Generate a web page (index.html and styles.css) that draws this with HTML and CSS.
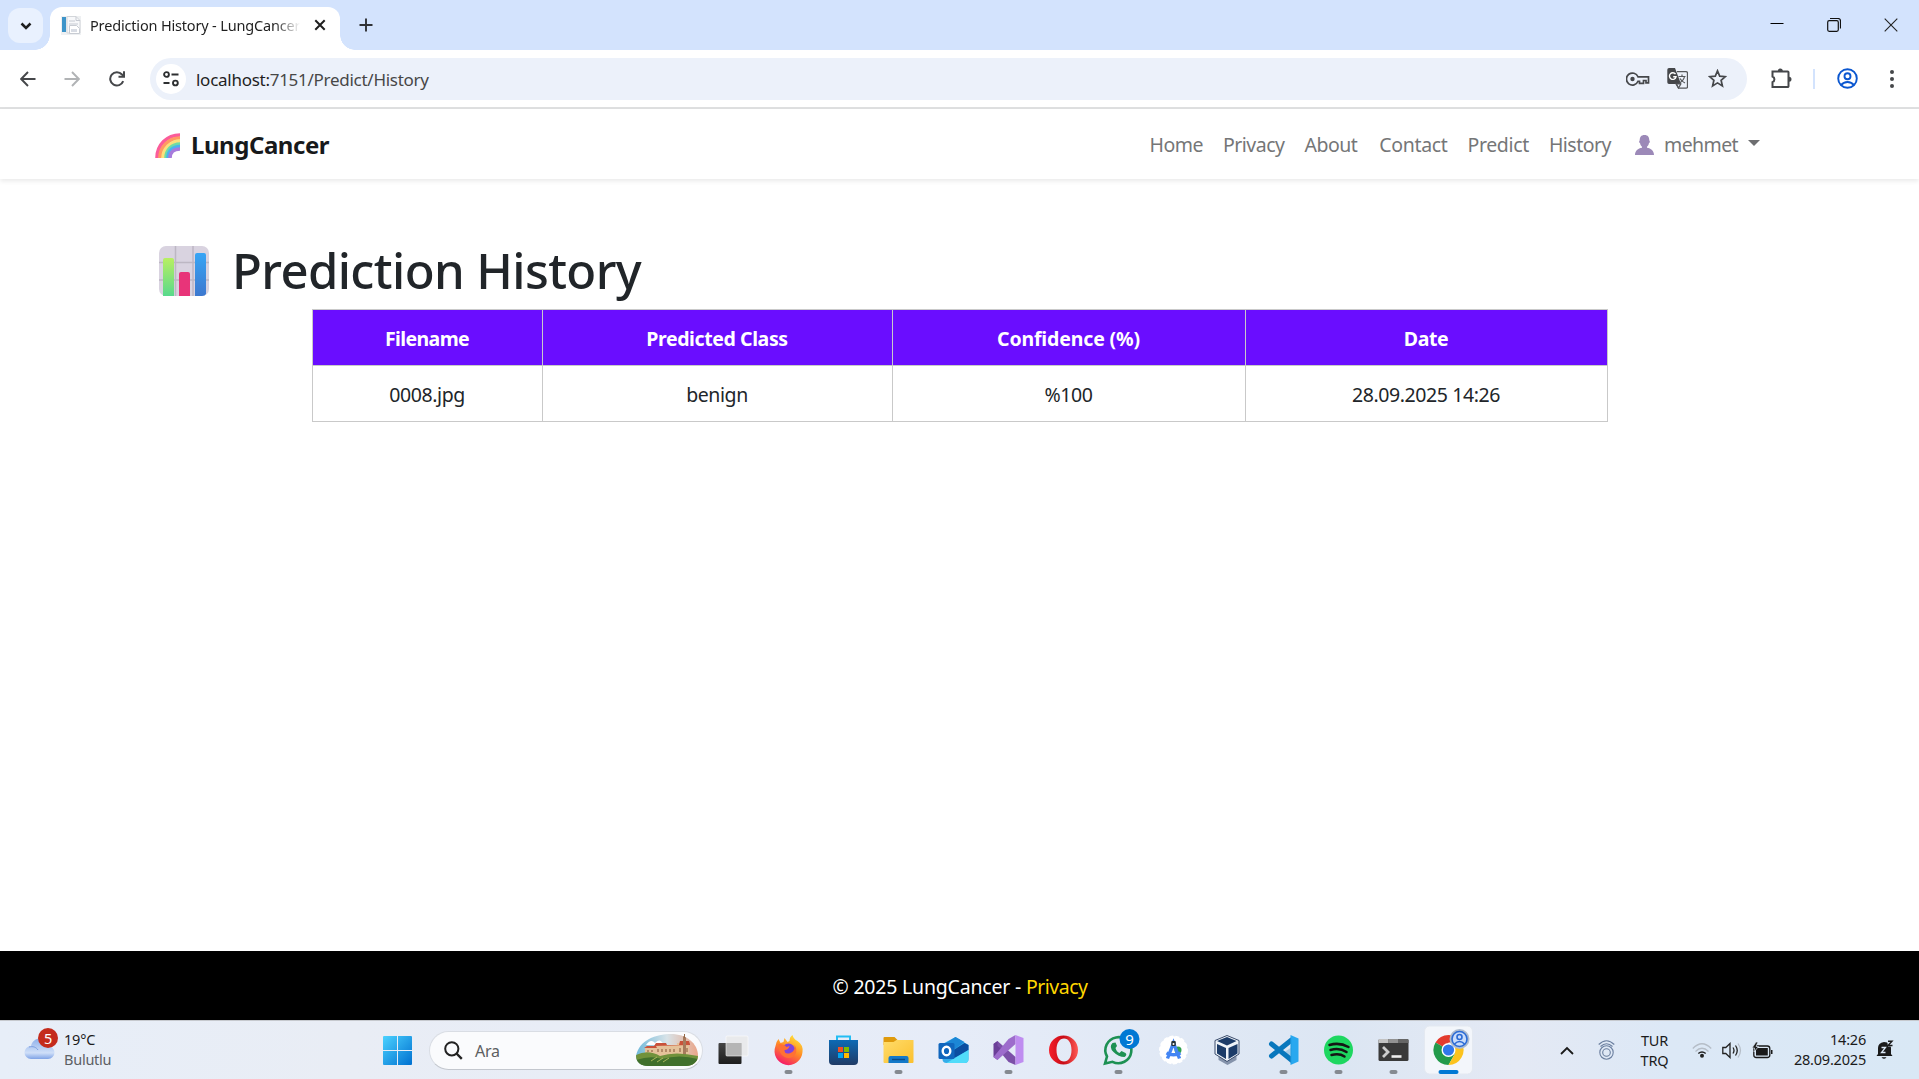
FILE: index.html
```html
<!DOCTYPE html>
<html lang="en">
<head>
<meta charset="utf-8">
<title>Prediction History - LungCancer</title>
<link rel="stylesheet" href="styles.css">
</head>
<body>
<div class="tabstrip">
  <button class="tab-search"><svg width="35" height="35" viewBox="0 0 35 35"><path d="M13.5 15.5l4.5 4.5 4.5-4.5" fill="none" stroke="#1f1f1f" stroke-width="2.5"/></svg></button>
  <div class="tab">
    <svg class="favicon" width="20" height="20" viewBox="0 0 20 20"><path d="M0 1h20v19H0z" fill="#eef0f2"/><path d="M1 2h4v15H1z" fill="#3d94c9"/><path d="M6 1.500h9l4 4V18H6z" fill="#f7f8fa" stroke="#d3d6da"/><path d="M15 1.500v4h4M8 6h6M8 9h9" fill="none" stroke="#c6cad2"/><path d="M8.500 10.500h7l3 3v5h-10z" fill="#fff" stroke="#c8ccd3"/><path d="M10 14h6v3h-6z" fill="#d8dce4"/></svg>
    <span class="tab-title">Prediction History - LungCancer</span>
    <svg class="tab-close" width="12" height="12" viewBox="0 0 12 12"><path d="M1.300 1.300l9.400 9.400M10.700 1.300l-9.400 9.400" stroke="#1f1f1f" stroke-width="2"/></svg>
  </div>
  <svg class="tab-new" width="14" height="14" viewBox="0 0 14 14"><path d="M7 .5v13M.5 7h13" stroke="#303236" stroke-width="1.900"/></svg>
  <div class="window-buttons">
    <svg width="14" height="14" viewBox="0 0 14 14"><path d="M.5 5.500h13" stroke="#000" stroke-width="1"/></svg>
    <svg width="14" height="14" viewBox="0 0 14 14"><path d="M3 .5h8a2.500 2.500 0 0 1 2.500 2.500v7.500" fill="none" stroke="#111" stroke-width="1.200"/><rect x=".7" y="2.700" width="10.600" height="10.600" rx="1.500" fill="none" stroke="#111" stroke-width="1.200"/></svg>
    <svg width="14" height="14" viewBox="0 0 14 14"><path d="M.7.700l12.600 12.600M13.300.700L.7 13.300" stroke="#222" stroke-width="1.100"/></svg>
  </div>
</div>
<div class="toolbar">
  <svg width="16" height="16" viewBox="0 0 16 16"><path d="M15.500 8H1.500M8 1L1.200 8 8 15" fill="none" stroke="#45474a" stroke-width="1.900"/></svg>
  <svg class="forward" width="16" height="16" viewBox="0 0 16 16"><path d="M.5 8h14M8 1l6.800 7L8 15" fill="none" stroke="#b1b3b5" stroke-width="1.900"/></svg>
  <svg class="reload" width="16" height="16" viewBox="0 0 16 16"><path d="M14.200 10.200A6.700 6.700 0 1 1 13 3.500l2 2" fill="none" stroke="#45474a" stroke-width="2"/><path d="M16 .3v6.500H9.500v-2H14V.3z" fill="#45474a"/></svg>
  <div class="omnibox">
    <span class="site-info"><svg width="16" height="16" viewBox="0 0 16 16"><g fill="none" stroke="#2d2f31" stroke-width="1.900"><circle cx="3.500" cy="3.500" r="2.400"/><path d="M8.500 3.500h7M.5 12h6"/><circle cx="12.400" cy="12" r="2.400"/></g></svg></span>
    <span class="url"><b>localhost:</b>7151/Predict/History</span>
    <svg class="key" width="24" height="14" viewBox="0 0 24 14"><path d="M12 4.800h10.500v6H20V8.500h-2.500v2.800h-4V9.300H12A6 6 0 1 1 12 4.800z" fill="none" stroke="#45474a" stroke-width="1.700"/><circle cx="6.500" cy="7" r="2.200" fill="#45474a"/></svg>
    <svg class="translate" width="21" height="21" viewBox="0 0 21 21"><path d="M2 0h6l6 16H2a1.700 1.700 0 0 1-1.700-1.700V1.700A1.700 1.700 0 0 1 2 0z" fill="#45474a"/><path d="M10 3.700h9a1.500 1.500 0 0 1 1.500 1.500v13.500a1.500 1.500 0 0 1-1.500 1.500h-7.500L9.500 16" fill="none" stroke="#55575a" stroke-width="1.300"/><path d="M9 16l2.500 4 2.300-4zM11.500 8.500h7M15 6.500v2M17.500 8.500c-.5 3-2.500 5-5 6.500M13 10.500c1 2 3 3.500 5 4.500" fill="none" stroke="#55575a" stroke-width="1.200"/><path d="M8.500 6.200A3.300 3.300 0 1 0 9 8.800H6.200" fill="none" stroke="#fff" stroke-width="1.400"/></svg>
    <svg class="star" width="19" height="19" viewBox="0 0 19 19"><path d="M9.500 1.800l2.200 5.300 5.700.5-4.300 3.700 1.300 5.600-4.900-3-4.900 3 1.300-5.600L1.600 7.600l5.700-.5z" fill="none" stroke="#45474a" stroke-width="1.700"/></svg>
  </div>
  <svg class="extensions" width="21" height="21" viewBox="0 0 21 21"><path d="M1.500 3.500h15.200a.8.800 0 0 1 .8.800v14a.8.800 0 0 1-.8.800H1.500v-5a3 3 0 0 0 0-5.600z" fill="none" stroke="#45474a" stroke-width="2"/><path d="M6.800 3a2.500 2.500 0 0 1 5 0zM18 8.700a2.500 2.500 0 0 1 0 5z" fill="#45474a"/></svg>
  <i class="divider"></i>
  <svg class="profile" width="21" height="21" viewBox="0 0 21 21"><g fill="none" stroke="#0b57d0" stroke-width="1.900"><circle cx="10.500" cy="10.500" r="9.300"/><circle cx="10.500" cy="8.200" r="3"/><path d="M4 17.200c3.300-4.300 9.700-4.300 13 0"/></g></svg>
  <svg class="menu" width="4" height="18" viewBox="0 0 4 18"><g fill="#45474a"><circle cx="2" cy="2" r="2"/><circle cx="2" cy="9" r="2"/><circle cx="2" cy="16" r="2"/></g></svg>
</div>

<header class="site-header">
  <a class="brand"><svg width="25" height="25" viewBox="0 0 25 25"><g fill="none" stroke-width="3.600"><path d="M2 25C2 12 12 2 25 2" stroke="#fb5c9a"/><path d="M5 25C5 14 14 5 25 5" stroke="#ff9b62"/><path d="M8 25C8 16 16 8 25 8" stroke="#fbe07d"/><path d="M11 25c0-8 6-14 14-14" stroke="#6fdca4"/><path d="M13 25c0-7 5-11.500 12-11.500" stroke="#4bb2ee"/><path d="M15 25c0-6 4-9 10-9" stroke="#a77bdc"/></g></svg><span>LungCancer</span></a>
  <nav class="site-nav">
    <a>Home</a><a>Privacy</a><a class="about">About</a><a class="contact">Contact</a><a class="predict">Predict</a><a class="history">History</a>
    <a class="user"><svg width="19" height="20" viewBox="0 0 19 20"><path d="M9.500 0C13 0 14.300 2.200 14.300 5.500c.8 0 .8 2.500-.3 2.600-.3 1.800-1 3-2 3.600v1c4 .5 7 3.300 7 7.300H0c0-4 3-6.800 7-7.300v-1c-1-.6-1.700-1.800-2-3.600-1.100-.1-1.100-2.600-.3-2.600C4.700 2.200 6 0 9.500 0z" fill="#9c89b8"/></svg><span>mehmet</span><i class="caret"></i></a>
  </nav>
</header>

<main class="page">
  <h1><svg width="50" height="50" viewBox="0 0 50 50"><defs><linearGradient id="green" x2="0" y2="1"><stop stop-color="#b9ef62"/><stop offset="1" stop-color="#58d98c"/></linearGradient><linearGradient id="blue" x2="0" y2="1"><stop stop-color="#37a5f5"/><stop offset="1" stop-color="#3d78cf"/></linearGradient></defs><rect width="50" height="50" rx="7" fill="#d9d3e0"/><path d="M16.500 0v50M34 0v50M0 16.500h50M0 34h50" stroke="#bdb7c3" stroke-width="1.500"/><path d="M4 50V14a2 2 0 0 1 2-2h7a2 2 0 0 1 2 2v36z" fill="url(#green)"/><path d="M20 50V28a2 2 0 0 1 2-2h7a2 2 0 0 1 2 2v22z" fill="#e83479"/><path d="M36 50V9a2 2 0 0 1 2-2h7a2 2 0 0 1 2 2v39q-1 2-4 2z" fill="url(#blue)"/></svg><span>Prediction History</span></h1>
  <table class="results">
    <thead><tr><th class="c1">Filename</th><th class="c2">Predicted Class</th><th class="c3">Confidence (%)</th><th class="c4">Date</th></tr></thead>
    <tbody><tr><td>0008.jpg</td><td>benign</td><td>%100</td><td>28.09.2025 14:26</td></tr></tbody>
  </table>
</main>

<footer class="site-footer">© 2025 LungCancer -&nbsp;<a>Privacy</a></footer>

<div class="taskbar">
  <div class="weather">
    <div class="cloud"><svg width="31" height="22" viewBox="0 0 31 22"><defs><linearGradient id="cloud" x2="0" y2="1"><stop stop-color="#8fb0ea"/><stop offset=".7" stop-color="#cfdff8"/><stop offset="1" stop-color="#7fa3e6"/></linearGradient></defs><path d="M7 21a6.500 6.500 0 0 1 0-13C8 3 12 .5 16 .5S23 4 24 8a6.500 6.500 0 0 1 0 13z" fill="url(#cloud)"/><path d="M5 9c4-1 7 0 9 3" fill="none" stroke="#7d9fe0"/></svg><b>5</b></div>
    <div class="weather-text">19°C<br><span>Bulutlu</span></div>
  </div>
  <svg class="start" width="29" height="29" viewBox="0 0 29 29"><defs><linearGradient id="win" x2="1" y2="1"><stop stop-color="#4bd2ff"/><stop offset="1" stop-color="#0070d0"/></linearGradient></defs><path d="M0 1a1 1 0 0 1 1-1h13v14H0zM15 0h13a1 1 0 0 1 1 1v13H15zM0 15h14v14H1a1 1 0 0 1-1-1zM15 15h14v13a1 1 0 0 1-1 1H15z" fill="url(#win)"/></svg>
  <div class="search">
    <svg width="19" height="19" viewBox="0 0 19 19"><circle cx="7.800" cy="7.800" r="6.600" fill="none" stroke="#222" stroke-width="2"/><path d="M12.500 12.500l5.300 5.300" stroke="#222" stroke-width="2.400"/></svg>
    <span>Ara</span>
    <svg class="castle" width="62" height="32" viewBox="0 0 62 32"><defs><clipPath id="oval"><path d="M0 22C3 6 20 0 35 0c15 0 27 9 27 22 0 6-6 10-12 10H12C5 32 0 28 0 22z"/></clipPath><linearGradient id="sky" x2="1"><stop stop-color="#6fb9da"/><stop offset=".5" stop-color="#d8e3e8"/><stop offset="1" stop-color="#e9a68a"/></linearGradient></defs><g clip-path="url(#oval)"><path d="M0 0h62v32H0z" fill="url(#sky)"/><path d="M10 11q5-7 9-2 5-6 9 2z" fill="#fff"/><path d="M9 14h11v7H9zM19 11h23v11H19zM41 9h12v13H41z" fill="#e5c29a"/><path d="M8 14l3-2h9l1 2zM18 12l2-3h10l1 2h12l1-4h9l1 3v1z" fill="#c9523a"/><path d="M47 1h3v20h-3z" fill="#a67a5c"/><path d="M22 15v3M26 15v3M30 15v3M34 15v3M38 15v3M44 14v4M51 14v4M12 16v2M16 16v2" stroke="#946748" stroke-width="1.200"/><path d="M0 21q12-6 24 1 15-5 38 0v10H0z" fill="#71923c"/><path d="M0 26q15-5 26-1 17-5 36 0v7H0z" fill="#41702c"/><path d="M15 27l6-4M21 28l6-4M27 28l6-4" stroke="#a9b65c"/></g><path d="M48.500-1v5" stroke="#946748"/></svg>
  </div>
  <div class="apps">
    <!-- Task view -->
    <svg viewBox="-27.500 -30 55 59"><defs><linearGradient id="tv" x2="0" y2="1"><stop stop-color="#454545"/><stop offset="1" stop-color="#1d1d1d"/></linearGradient></defs><rect x="-15" y="-7" width="23" height="21" rx="1" fill="url(#tv)"/><rect x="-7.500" y="-14" width="22" height="20" rx="1" fill="#e9e9e9" fill-opacity=".82" stroke="#fff" stroke-width=".6"/><path d="M-7-7H8V5.500H-7z" fill="#b5b5b5"/></svg>
    <!-- Firefox -->
    <svg viewBox="-27.500 -30 55 59"><defs><linearGradient id="ff" x1=".8" y1="0" x2=".3" y2="1"><stop stop-color="#ffe83b"/><stop offset=".5" stop-color="#ff8a26"/><stop offset="1" stop-color="#f5156c"/></linearGradient></defs><path d="M-10-11l2 4 3-1 1-4 3 4 2-1q0-4 3-6 1 4 5 6 6 4 5 11A14 14 0 1 1-13-4q1-5 3-7z" fill="url(#ff)"/><circle cx="0" cy="0" r="6.500" fill="#8043dc"/><path d="M-10-6q6 0 8 3l3-1q-1 4-5 4 0 5 6 3 5-2 4-8 3 4 1 9-4 6-11 3-6-3-6-13z" fill="#ff7133"/><rect class="running" x="-4" y="20" width="8" height="4" rx="2"/></svg>
    <!-- Store -->
    <svg viewBox="-27.500 -30 55 59"><defs><linearGradient id="st" x2="0" y2="1"><stop stop-color="#0d6ab5"/><stop offset="1" stop-color="#203b66"/></linearGradient></defs><path d="M-6.500-9v-4.500h13V-9" fill="none" stroke="#23bdf4" stroke-width="2"/><path d="M-14.500-10h29v21a4 4 0 0 1-4 4h-21a4 4 0 0 1-4-4z" fill="url(#st)"/><path d="M-5.500-3h5v5h-5z" fill="#f25022"/><path d="M.5-3h5v5h-5z" fill="#7fba00"/><path d="M-5.500 3h5v5h-5z" fill="#00a4ef"/><path d="M.5 3h5v5h-5z" fill="#ffb900"/></svg>
    <!-- Explorer -->
    <svg viewBox="-27.500 -30 55 59"><defs><linearGradient id="fo" x2="1" y2="1"><stop stop-color="#ffdc6b"/><stop offset="1" stop-color="#fbc02e"/></linearGradient></defs><path d="M-15-12q0-1 1-1h10l3 3-3 5h-11z" fill="#df9a0c"/><path d="M-15-8h10l3-2h17v22q0 1-1 1h-28q-1 0-1-1z" fill="url(#fo)"/><path d="M-10 13V8q0-2 2-2H8q2 0 2 2v5z" fill="#1479c9"/><path d="M-6.500 9.500h13" stroke="#0a4b86" stroke-width="1.400"/><rect class="running" x="-4" y="20" width="8" height="4" rx="2"/></svg>
    <!-- Outlook -->
    <svg viewBox="-27.500 -30 55 59"><path d="M-11-6L2-13l13 8v14q0 4-4 4H-7q-4 0-4-4z" fill="#34aeea"/><path d="M-11-5L2-13l9 5L-3 2z" fill="#1c87d6"/><path d="M15-5v5L1 8l-4-6 14-9z" fill="#0b4da0"/><path d="M15 0v9q0 4-4 4H-7z" fill="#51dcfa"/><rect x="-15" y="-7" width="16" height="16" rx="1.500" fill="#1066bd"/><ellipse cx="-7" cy="1" rx="3.800" ry="4.300" fill="none" stroke="#fff" stroke-width="2.400"/></svg>
    <!-- Visual Studio -->
    <svg viewBox="-27.500 -30 55 59"><path d="M-15-6l4-3L7 7v8l-7-3z" fill="#7c50a8"/><path d="M-15 7V-6l4-3v19zM-11 4l5-4-5-4z" fill-rule="evenodd" fill="#6b3f98"/><path d="M-15 7l4 3L7-6v-9L0-11z" fill="#9d6ccc"/><path d="M7-15l8 3v24l-8 3z" fill="#bf8df0"/><rect class="running" x="-4" y="20" width="8" height="4" rx="2"/></svg>
    <!-- Opera -->
    <svg viewBox="-27.500 -30 55 59"><defs><linearGradient id="op" x2="1"><stop stop-color="#f5202c"/><stop offset=".5" stop-color="#c70c17"/><stop offset="1" stop-color="#ff5a55"/></linearGradient></defs><path d="M0-14.500a14.500 14.500 0 1 1 0 29 14.500 14.500 0 0 1 0-29zM.5-11.500C-4-11.500-7-7-7 0s3 11.500 7.500 11.500S8 7 8 0 5-11.500.5-11.500z" fill-rule="evenodd" fill="url(#op)"/></svg>
    <!-- WhatsApp -->
    <svg viewBox="-27.500 -30 55 59"><path d="M-13.500 13.500l2-7A13 13 0 1 1-6 11.800z" fill="none" stroke="#1d9153" stroke-width="2.600"/><path d="M-6-7q-4 4 1 9T6 7q3-2 1-4L3 1 1 3Q-2 2-3-2l1.500-2-1.500-3.500z" fill="#1d9153"/><rect class="running" x="-4" y="20" width="8" height="4" rx="2"/><circle cx="11" cy="-11" r="10" fill="#0078d4"/><text class="badge-count" x="11" y="-5.500">9</text></svg>
    <!-- Android Studio -->
    <svg viewBox="-27.500 -30 55 59"><circle r="13.700" fill="#fff" stroke="#fff" stroke-width="1.500" stroke-dasharray="4 2"/><circle cx="4.500" cy="0" r="3.500" fill="#30a14e"/><path d="M-6 8.500L0-7 6 8.500M-7 3q7 3.500 14 0" fill="none" stroke="#4285f4" stroke-width="3.400"/><rect x="-2.200" y="-9" width="4.500" height="5" rx="1" fill="#263238"/><circle cy="-6" r="1" fill="#fff"/></svg>
    <!-- VirtualBox -->
    <svg viewBox="-26.500 -30 55 59"><path d="M-9 5v5L0 15l9-5V5z" fill="#8593ab"/><path d="M-.5-14.500l12 5V4l-12 7.500L-12.500 4V-9.500z" fill="#eef3f8" stroke="#3a4c6c"/><path d="M-.5-13l9.500 4-9.500 4.500L-10.500-9zM-10.500-6l9 4V9l-9-5.500zM10-6L1-2V9l9-5.500z" fill="#1b3b68"/></svg>
    <!-- VS Code -->
    <svg viewBox="-27.500 -30 55 59"><path d="M-12-6L8 10M-12 6L8-10" stroke="#0877bd" stroke-width="5" stroke-linecap="round"/><path d="M7-15l8 3.500v23L7 15z" fill="#29a8ef"/><path d="M8-15v29L-2 4l9-6z" fill="#0877bd" opacity=".25"/><rect class="running" x="-4" y="20" width="8" height="4" rx="2"/></svg>
    <!-- Spotify -->
    <svg viewBox="-27.500 -30 55 59"><circle r="14.500" fill="#1ed760"/><path d="M-9-5q10-3 19 2M-8 0q9-2.500 16 2M-7 5q8-2 13 1.500" fill="none" stroke="#151515" stroke-width="2.500" stroke-linecap="round"/><rect class="running" x="-4" y="20" width="8" height="4" rx="2"/></svg>
    <!-- Terminal -->
    <svg viewBox="-27.500 -30 55 59"><rect x="-15" y="-11" width="30" height="22" rx="1.500" fill="#3a3a3a"/><path d="M-15-7v-3q0-1 1-1h9v4z" fill="#c3c3c3"/><path d="M-5-11H5v4H-5z" fill="#929292"/><path d="M5-11h9q1 0 1 1v3H5z" fill="#666"/><path d="M-10.500-3l5 5-5 5" fill="none" stroke="#ccc" stroke-width="2.800"/><path d="M-2 6.500H8" stroke="#eee" stroke-width="2.600"/><rect class="running" x="-4" y="20" width="8" height="4" rx="2"/></svg>
    <!-- Chrome -->
    <svg viewBox="-27.500 -30 55 59"><rect x="-24" y="-24" width="48" height="48" rx="5" fill="#f3f6fb" stroke="#e4e9f1"/><path d="M0 0l-13-7.500A15 15 0 0 1 13-7.500H0z" fill="#e33b2e"/><path d="M-13-7.500A15 15 0 0 0 0 15l6.500-11.500L0 0z" fill="#229a4b"/><path d="M13-7.500A15 15 0 0 1 0 15L6.500 3.500V-7.500z" fill="#fcc31e"/><circle r="7" fill="#fff"/><circle r="5.600" fill="#3078ec"/><circle cx="11" cy="-11" r="10" fill="#aebccf"/><g fill="none" stroke="#2b6bd5" stroke-width="1.600"><circle cx="11" cy="-11" r="7.500" fill="#c9dcfa"/><circle cx="11" cy="-13" r="2.500"/><path d="M6-6q5-5 10 0"/></g><rect x="-10" y="20" width="20" height="4" rx="2" fill="#0078d4"/></svg>
  </div>
  <div class="tray">
    <svg width="14" height="9" viewBox="0 0 14 9"><path d="M1 8l6-6 6 6" fill="none" stroke="#1a1a1a" stroke-width="1.800"/></svg>
    <svg class="camera" width="17" height="20" viewBox="0 0 17 20"><g fill="none" stroke="#6b7f9f" stroke-width="1.100"><circle cx="8.500" cy="12.500" r="6.700"/><circle cx="8.500" cy="12.500" r="3.800"/><path d="M.7 4.500Q8.500-3 16.300 4.500M2.500 6.500q6-5.500 12 0"/></g></svg>
    <div class="language">TUR<br>TRQ</div>
    <svg class="wifi" width="20" height="15" viewBox="0 0 20 15"><path d="M.8 5.500q9.200-9.500 18.400 0M3.500 8.500q6.500-6.500 13 0" fill="none" stroke="#b5bdc7" stroke-width="1.300"/><path d="M6.300 10.500q3.700-3 7.400 0" fill="none" stroke="#222" stroke-width="1.500"/><circle cx="10" cy="12.700" r="2" fill="#222"/></svg>
    <svg class="sound" width="20" height="17" viewBox="0 0 20 17"><path d="M.8 5.500h3L8 1.500v14L3.800 11.500h-3zM11 5.500q2 3 0 6M13.500 3.500q3.500 5 0 10" fill="none" stroke="#222" stroke-width="1.300"/><path d="M16 1.500q5 7 0 14" fill="none" stroke="#b5bdc7" stroke-width="1.200"/></svg>
    <svg class="battery" width="21" height="17" viewBox="0 0 21 17"><rect x="1.800" y="4" width="16" height="11.500" rx="2.500" fill="none" stroke="#1a1a1a" stroke-width="1.300"/><rect x="4" y="6" width="11.800" height="7.500" fill="#1a1a1a"/><path d="M19 8h1.500v4H19z" fill="#1a1a1a"/><path d="M4 0L0 6h2.500L2 10l4.500-5.500H4L6 0z" fill="#1a1a1a" stroke="#dce8f5" stroke-width=".7"/></svg>
    <div class="clock">14:26<br>28.09.2025</div>
    <svg class="bell" width="18" height="20" viewBox="0 0 18 20"><path d="M2 14V8q0-5 6-6 7 0 7 6v6l1.500 2H.5zM5.500 17.300h5q-2.500 3-5 0z" fill="#1a1a1a"/><path d="M5.500 7.500h4l-4 5h4" fill="none" stroke="#dbe8f5" stroke-width="1.300"/><path d="M11 0h7v6.500h-6z" fill="#dbe8f5"/><path d="M12 1.200h4L12 5.500h4.500" fill="none" stroke="#1a1a1a" stroke-width="1.400"/></svg>
  </div>
</div>
</body>
</html>
```
FILE: styles.css
```css
* { box-sizing: border-box; }
body {
  margin: 0;
  width: 1919px;
  height: 1079px;
  overflow: hidden;
  display: flex;
  flex-direction: column;
  background: #fff;
  color: #212529;
  font: 19.5px "Noto Sans", sans-serif;
  white-space: nowrap;
}
svg { display: block; flex: none; }

/* Browser tab strip */
.tabstrip { height: 50px; flex: none; display: flex; background: #d3e3fd; }
.tab-search { width: 35px; height: 35px; margin: 8px 7px 0 8px; padding: 0; border: 0; border-radius: 12px; background: #e9f1fe; flex: none; }
.tab {
  position: relative;
  width: 290px;
  height: 43px;
  margin-top: 7px;
  padding: 0 14px 7px 11px;
  display: flex;
  align-items: center;
  background: #fff;
  border-radius: 12px 12px 0 0;
  flex: none;
}
.tab::before, .tab::after { content: ""; position: absolute; bottom: 0; width: 15px; height: 15px; }
.tab::before { left: -15px; background: radial-gradient(circle at 0 0, transparent 14.5px, #fff 15px); }
.tab::after { right: -15px; background: radial-gradient(circle at 100% 0, transparent 14.5px, #fff 15px); }
.tab-title {
  width: 211px;
  margin-left: 9px;
  overflow: hidden;
  color: #1f1f1f;
  font-size: 14.5px;
  letter-spacing: -0.17px;
  mask-image: linear-gradient(90deg, #000 88%, transparent 100%);
}
.tab-close { margin-left: 14px; }
.tab-new { margin: 18px 0 0 19px; }
.window-buttons { margin-left: auto; padding: 18px 21px 0 0; display: flex; gap: 43px; }

/* Browser toolbar */
.toolbar {
  height: 59px;
  flex: none;
  display: flex;
  align-items: center;
  padding: 0 25px 0 20px;
  background: #fff;
  border-bottom: 2px solid #e0e1e2;
}
.forward { margin-left: 28px; }
.reload { margin-left: 29px; }
.omnibox {
  width: 1597px;
  height: 42px;
  margin-left: 25px;
  padding: 0 20px 0 6px;
  display: flex;
  align-items: center;
  background: #ecf1fa;
  border-radius: 21px;
}
.site-info { width: 30px; height: 30px; display: grid; place-items: center; background: #fff; border-radius: 50%; }
.url { margin: 1px 0 0 10px; color: #474747; font-size: 17px; letter-spacing: -0.27px; }
.url b { color: #1f1f1f; font-weight: 400; }
.key { margin-left: auto; }
.translate { margin-left: 17px; }
.star { margin-left: 20px; }
.extensions { margin-left: 24px; }
.divider { width: 2px; height: 20px; margin-left: 21px; background: #d3e3fd; }
.profile { margin-left: 22px; }
.menu { margin-left: auto; }

/* Site header */
.site-header {
  height: 70px;
  flex: none;
  padding: 0 159px 0 155px;
  display: flex;
  align-items: center;
  justify-content: space-between;
  box-shadow: 0 2px 5px rgba(0, 0, 0, 0.09);
}
.brand { display: flex; align-items: center; gap: 11px; color: #17191b; font-size: 24px; font-weight: 700; letter-spacing: -0.45px; }
.brand svg { margin-top: 3px; }
.site-nav { display: flex; gap: 20px; color: #757677; letter-spacing: -0.5px; }
.about { margin-right: 2px; }
.contact, .predict { letter-spacing: -0.35px; }
.history { letter-spacing: -0.5px; }
.user { display: flex; align-items: center; margin-left: 4px; letter-spacing: -0.6px; }
.user svg { margin-top: 2px; }
.user span { margin-left: 10px; }
.caret { margin: -2px 0 0 10px; border: 6px solid transparent; border-top-color: #6d6e70; border-bottom: 0; }

/* History page */
.page { flex: 1; padding: 61px 0 0; }
h1 { height: 60px; margin: 0 0 9px 159px; display: flex; align-items: center; gap: 23px; font-size: 49px; line-height: 60px; font-weight: 500; letter-spacing: -0.6px; }
h1 svg { margin-top: 2px; }
.results { width: 1296px; margin: 0 auto; border-collapse: collapse; table-layout: fixed; text-align: center; }
.results th, .results td { height: 56px; padding: 1px 0 0; border: 1px solid #c9c9c9; }
.results th { background: #6a0dff; color: #fff; font-weight: 700; letter-spacing: -0.4px; }
.results td { letter-spacing: -0.4px; }
.results .c1 { width: 230px; letter-spacing: -0.6px; }
.results .c2 { width: 350px; }
.results .c3 { width: 353px; letter-spacing: -0.15px; }

.site-footer { height: 69px; flex: none; display: flex; align-items: center; justify-content: center; padding: 2px 0 0 1px; background: #000; color: #fff; letter-spacing: -0.2px; }
.site-footer a { color: #ffd700; letter-spacing: -0.5px; }

/* Windows taskbar */
.taskbar {
  height: 59px;
  flex: none;
  display: flex;
  align-items: center;
  background: linear-gradient(90deg, #e7eef8, #e9edf5 18%, #e6ecf8 50%, #dce6f3 70%, #e4e9f4 79%, #dce8f6 87%, #d9e8f5);
  border-top: 1px solid #c6c9ce;
  color: #1b1b1b;
  font-size: 14.5px;
  line-height: 20px;
  letter-spacing: -0.2px;
}
.weather { width: 383px; padding-left: 24px; display: flex; align-items: center; }
.cloud { position: relative; }
.cloud svg { margin-top: -3px; }
.cloud b { position: absolute; left: 14px; top: -13px; width: 20px; height: 20px; border-radius: 50%; background: #c42b1c; color: #fff; font-weight: 400; text-align: center; }
.weather-text { margin: -2px 0 0 9px; }
.weather-text span { color: #5d6064; letter-spacing: -0.25px; }
.search {
  width: 274px;
  height: 39px;
  margin-left: 17px;
  padding: 0 4px 0 14px;
  display: flex;
  align-items: center;
  background: #fafbfd;
  border: 1px solid #d9dde4;
  border-bottom-color: #c3c7ce;
  border-radius: 20px;
  color: #5d5f62;
  font-size: 16px;
}
.search span { margin: 1px 0 0 12px; }
.castle { margin-left: auto; }
.apps { margin-left: 3px; height: 59px; margin-top: -1px; display: flex; }
.apps svg { width: 55px; height: 59px; }
.running { fill: #858a91; }
.badge-count { fill: #fff; font-size: 15px; text-anchor: middle; }
.tray { flex: 1; padding: 0 25px 0 84px; display: flex; align-items: center; }
.camera { margin-left: 24px; }
.language { width: 29px; margin-left: 25px; text-align: center; }
.wifi { margin-left: 23px; }
.sound { margin-left: 10px; }
.battery { margin-left: 10px; }
.clock { margin: -2px 0 0 auto; text-align: right; }
.bell { margin-left: 10px; }
```
